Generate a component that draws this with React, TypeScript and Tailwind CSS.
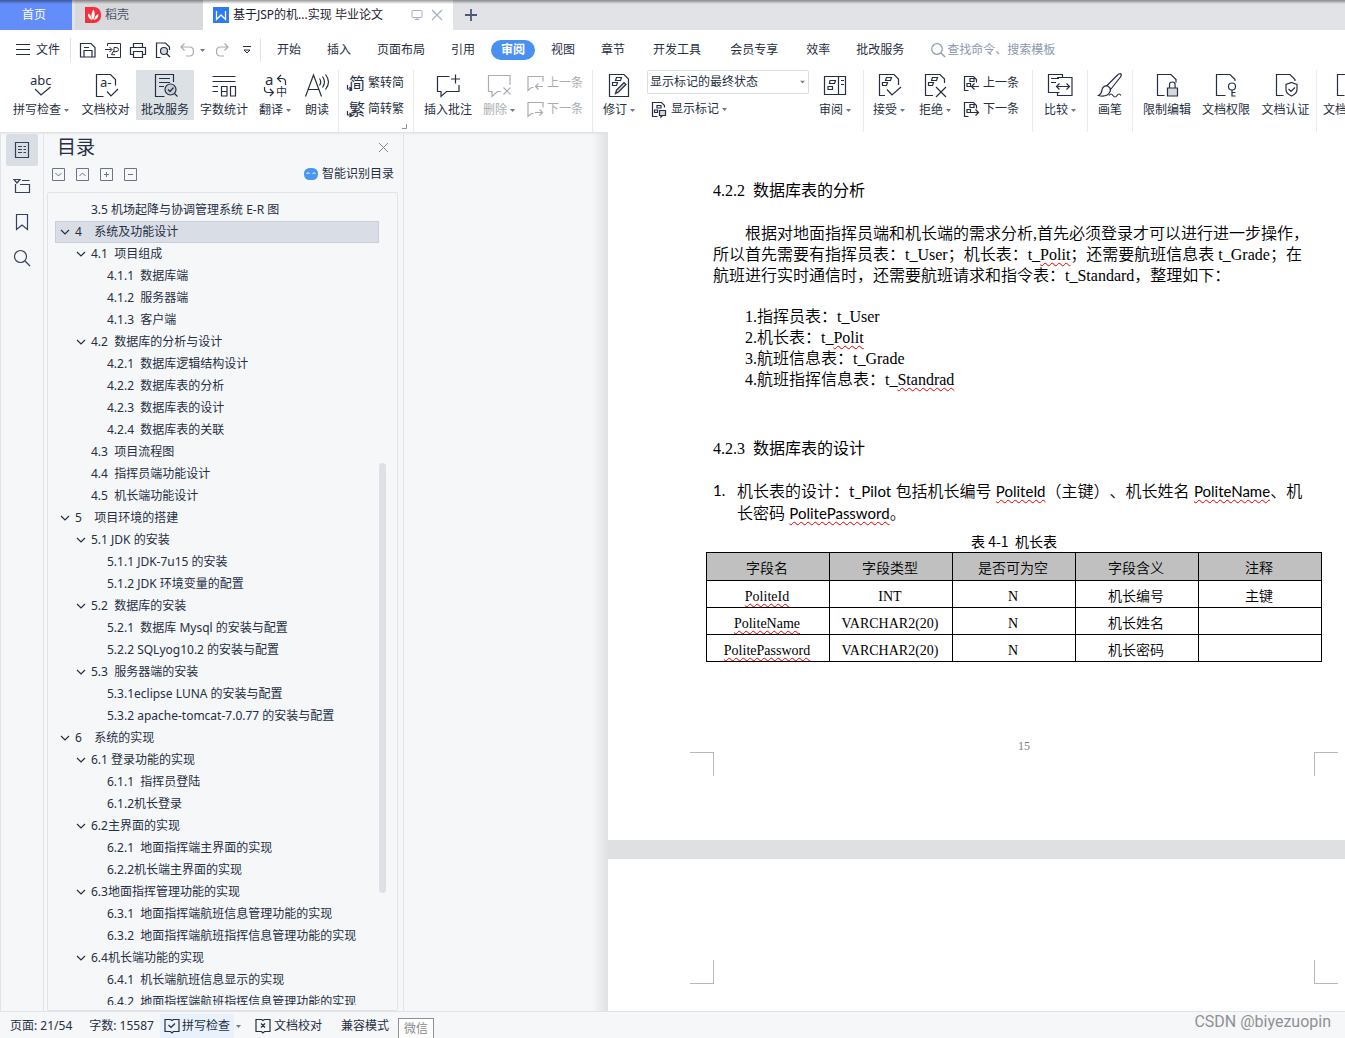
import React from "react";
import { LuMonitor } from "react-icons/lu";

type IconProps = { children: React.ReactNode; size?: string; box?: string; className?: string };

const Icon: React.FC<IconProps> = ({ children, size = "size-[26px]", box = "0 0 26 26", className = "" }) => (
  <svg viewBox={box} className={`${size} shrink-0 overflow-visible ${className}`} fill="none" stroke="currentColor" strokeWidth="1.2" aria-hidden="true">
    {children}
  </svg>
);

const Small: React.FC<{ children: React.ReactNode; className?: string }> = ({ children, className }) => (
  <Icon size="size-[18px]" box="0 0 18 18" className={className}>{children}</Icon>
);

const Caret = () => (
  <svg viewBox="0 0 5 3" className="w-[5px] h-[3px] shrink-0" fill="#6f788b" aria-hidden="true">
    <path d="M0 0h5L2.5 3z" />
  </svg>
);

const Divider = () => <div className="w-px h-[62px] bg-[#e9eaec] shrink-0" />;

// document outline with two revision marks, shared by the review buttons
const MarkedDoc = ({ d }: { d: string }) => (
  <>
    <path d={d} />
    <path d="M10.5 5.5h5l-1 3h-5zM6.5 10.5h5l-1 3h-4z" />
  </>
);

const icons = {
  spell: (
    <Icon>
      <text x="2" y="13" fontSize="13" fill="currentColor" stroke="none">abc</text>
      <path d="M7 17l6 6 9.500-8" />
    </Icon>
  ),
  proof: (
    <Icon>
      <path d="M10.500 24.500h-7v-22h14l5 5v6M14 19.500l4 4.500 7-7" />
      <text x="7" y="15" fontSize="13" fill="currentColor" stroke="none">a-</text>
    </Icon>
  ),
  correct: (
    <Icon>
      <path d="M12.500 24.500h-9v-22h18V10M7 6.500h11M7 10.500h11M7 14.500h5" />
      <circle cx="18.500" cy="17.500" r="5.500" fill="#c9ced6" />
      <path d="M22.500 21.500l3 3M16 17.500l2 2 3.500-4" />
    </Icon>
  ),
  count: (
    <Icon>
      <path d="M1.500 4.500h23M1.500 9.500h23M1.500 14.500H7M1.500 19.500H7M10.500 14.500h5.500v9.500h-5.500zM10.500 19.500H16M19.500 14.500h5v9.500h-5z" />
    </Icon>
  ),
  translate: (
    <Icon>
      <text x="3" y="13" fontSize="15" fill="currentColor" stroke="none">a</text>
      <text x="14" y="24" fontSize="11" fill="currentColor" stroke="none">中</text>
      <path d="M23.500 13v-3q0-3.500-3.500-3.500h-4M19 3l-3.500 3.500L19 10M2.500 15v2q0 3.500 3.500 3.500h5M8 17l3.500 3.500L8 24" />
    </Icon>
  ),
  read: (
    <Icon>
      <path d="M1.500 24.500L9.500 3l8 21.500M4.500 17.500h10.500M15.500 6.500q2.500 3.500 0 7M18.500 4.500q4 5.500 0 11M21.500 2.500q6 7.500 0 15" />
    </Icon>
  ),
  insertNote: (
    <Icon>
      <path d="M14.500 4.500h-12v15H6v5l5.500-5h12.500V13M20.500 2.500v9M16 7h9" />
    </Icon>
  ),
  deleteNote: (
    <Icon>
      <path d="M15 19.500h-3.500l-5.500 5v-5H2.500v-16h21.500V13M17.500 15.500l7 7M24.500 15.500l-7 7" />
    </Icon>
  ),
  revise: (
    <Icon>
      <MarkedDoc d="M3.500 2.500H18l4.500 4.500v17.500h-19z" />
      <path d="M9.500 21.500l1-3.500 7.500-7.500 2 2-7.500 7.500z" fill="#c9ced6" />
    </Icon>
  ),
  review: (
    <Icon>
      <path d="M2.500 4.500h21v18h-21zM16.500 4.500v18M19 8.500h3M19 12.500h3M8 8.500h5.500l-1 3h-5zM6 14.500h4.500v3H6z" />
    </Icon>
  ),
  accept: (
    <Icon>
      <MarkedDoc d="M9 23.500H3.500v-21h14.500l4.500 4.500v6M11 17.500l5 5.500 9-8" />
    </Icon>
  ),
  reject: (
    <Icon>
      <MarkedDoc d="M11 23.500H3.500v-21h14.500l4.500 4.500v4M14 15l10 10M24 15L14 25" />
    </Icon>
  ),
  compare: (
    <Icon>
      <path d="M12.500 20.500h-11v-18h14v3M15.500 5.500h9.500v18H10.500v-3M10 5.500h7M4 6.500h8M4 10.500h5M9.500 14.500h13M12.500 11.500l-3 3 3 3M19.500 11.500l3 3-3 3" />
    </Icon>
  ),
  brush: (
    <Icon>
      <path d="M23.500 1.500q1.500 1 0 3.500L14 17l-4-3.500L20 3.500q2-2 3.500-2zM10 14q-4-.5-5 4-.5 4-3.500 5.500 8 2 11-3 1.500-2 .5-4M12 23.500q2-3 4 0t4 0 4 0" />
    </Icon>
  ),
  restrict: (
    <Icon>
      <path d="M10.500 23.500h-7v-21H17l5 5v3M15.500 16v-3.500q0-2.500 2.800-2.500t2.800 2.500V16" />
      <path d="M13.500 16h10v8h-10z" fill="#d5d8dd" />
    </Icon>
  ),
  permission: (
    <Icon>
      <path d="M12.500 23.500h-9v-21H17l5 5v1.500M19 18v6.500M19 20.500h3.500M19 24h3.500" />
      <circle cx="19" cy="14.500" r="3.500" />
    </Icon>
  ),
  certify: (
    <Icon>
      <path d="M10.500 23.500h-7v-21H17l5 5v1.500M18.500 10.500l5.500 2v5q0 4-5.500 6.500-5.500-2.500-5.500-6.500v-5zM15.500 17l2.500 2.500 4-4" />
    </Icon>
  ),
};

const noteArrow = (arrow: string) => (
  <Small>
    <path d={`M7.500 13.500H5.500l-3.500 3v-14h15v5${arrow}`} />
  </Small>
);

const docArrow = (arrow: string) => (
  <Small>
    <path d={`M6.500 16.500h-4v-14h9l3 3v3M8 4.500h4v3H8zM5 9.500h3.500v3H5z${arrow}`} />
  </Small>
);

const convertIcon = (char: string) => (
  <Small>
    <text x="2" y="15" fontSize="16" fill="currentColor" stroke="none">{char}</text>
    <path d="M.5 11v4H4M2.500 13l2 2-2 2" />
  </Small>
);

const leftArrow = "M17 12.500H9.500M12.500 9.500l-3 3 3 3";
const rightArrow = "M9 12.500h7.500M13.500 9.500l3 3-3 3";

type BigProps = { icon: React.ReactNode; label: string; width: string; caret?: boolean; active?: boolean; muted?: boolean };

const BigButton: React.FC<BigProps> = ({ icon, label, width, caret, active, muted }) => (
  <button
    className={`${width} h-[50px] shrink-0 flex flex-col items-center justify-between pt-[2px] pb-[2px] whitespace-nowrap ${active ? "bg-[#dce1e6]" : ""} ${muted ? "text-[#a9acb3]" : ""}`}
  >
    {icon}
    <span className="flex items-center gap-[3px] leading-4">
      {label}
      {caret && <Caret />}
    </span>
  </button>
);

const RowButton: React.FC<{ icon: React.ReactNode; label: string; caret?: boolean; muted?: boolean }> = ({ icon, label, caret, muted }) => (
  <button className={`flex items-center gap-[3px] h-[26px] leading-4 whitespace-nowrap ${muted ? "text-[#a9acb3]" : ""}`}>
    {icon}
    {label}
    {caret && <Caret />}
  </button>
);

const outline: { level: number; text: string; open?: boolean; selected?: boolean }[] = [
  { level: 1, text: "3.5 机场起降与协调管理系统 E-R 图" },
  { level: 0, text: "4    系统及功能设计", open: true, selected: true },
  { level: 1, text: "4.1  项目组成", open: true },
  { level: 2, text: "4.1.1  数据库端" },
  { level: 2, text: "4.1.2  服务器端" },
  { level: 2, text: "4.1.3  客户端" },
  { level: 1, text: "4.2  数据库的分析与设计", open: true },
  { level: 2, text: "4.2.1  数据库逻辑结构设计" },
  { level: 2, text: "4.2.2  数据库表的分析" },
  { level: 2, text: "4.2.3  数据库表的设计" },
  { level: 2, text: "4.2.4  数据库表的关联" },
  { level: 1, text: "4.3  项目流程图" },
  { level: 1, text: "4.4  指挥员端功能设计" },
  { level: 1, text: "4.5  机长端功能设计" },
  { level: 0, text: "5    项目环境的搭建", open: true },
  { level: 1, text: "5.1 JDK 的安装", open: true },
  { level: 2, text: "5.1.1 JDK-7u15 的安装" },
  { level: 2, text: "5.1.2 JDK 环境变量的配置" },
  { level: 1, text: "5.2  数据库的安装", open: true },
  { level: 2, text: "5.2.1  数据库 Mysql 的安装与配置" },
  { level: 2, text: "5.2.2 SQLyog10.2 的安装与配置" },
  { level: 1, text: "5.3  服务器端的安装", open: true },
  { level: 2, text: "5.3.1eclipse LUNA 的安装与配置" },
  { level: 2, text: "5.3.2 apache-tomcat-7.0.77 的安装与配置" },
  { level: 0, text: "6    系统的实现", open: true },
  { level: 1, text: "6.1 登录功能的实现", open: true },
  { level: 2, text: "6.1.1  指挥员登陆" },
  { level: 2, text: "6.1.2机长登录" },
  { level: 1, text: "6.2主界面的实现", open: true },
  { level: 2, text: "6.2.1  地面指挥端主界面的实现" },
  { level: 2, text: "6.2.2机长端主界面的实现" },
  { level: 1, text: "6.3地面指挥管理功能的实现", open: true },
  { level: 2, text: "6.3.1  地面指挥端航班信息管理功能的实现" },
  { level: 2, text: "6.3.2  地面指挥端航班指挥信息管理功能的实现" },
  { level: 1, text: "6.4机长端功能的实现", open: true },
  { level: 2, text: "6.4.1  机长端航班信息显示的实现" },
  { level: 2, text: "6.4.2  地面指挥端航班指挥信息管理功能的实现" },
];

const indent = ["pl-1", "pl-5", "pl-9"];

const columns = ["字段名", "字段类型", "是否可为空", "字段含义", "注释"];
const rows = [
  ["PoliteId", "INT", "N", "机长编号", "主键"],
  ["PoliteName", "VARCHAR2(20)", "N", "机长姓名", ""],
  ["PolitePassword", "VARCHAR2(20)", "N", "机长密码", ""],
];

const Typo = ({ children }: { children: React.ReactNode }) => (
  <span className="underline decoration-wavy decoration-1 decoration-[#e00000] underline-offset-2">{children}</span>
);

const TabBar = () => (
  <div className="relative flex h-[30px] bg-[#e2e3e7] shrink-0 leading-[30px] whitespace-nowrap">
    <button className="w-[72px] bg-[#628dfa] text-white pr-1">首页</button>
    <button className="w-[128px] ml-[3px] bg-[#d8d9dc] flex items-center gap-1 pl-[10px] text-[#4b5468]">
      <svg viewBox="0 0 16 16" className="size-4" aria-hidden="true">
        <path d="M0 0h9a7 7 0 0 1 7 7v2a7 7 0 0 1-7 7H0z" fill="#f3303c" />
        <path d="M8 13C5 9 7 5 8.500 2.500 10 5 10.500 9 8 13zM7 13C4 12 2.500 9.500 3 6.500 5.500 7.500 6.500 10 7 13zM9 13c.5-3 2-5 4.500-6C13.500 10 12 12.500 9 13z" fill="#fff" />
      </svg>
      稻壳
    </button>
    <div className="w-[250px] bg-white flex items-center pl-[10px] text-[#1b2130]">
      <svg viewBox="0 0 16 16" className="size-4 mr-1" aria-hidden="true">
        <path d="M0 0h16v16H0z" fill="#2b7bf3" />
        <path d="M3.500 4v8.500L8 8l4.500 4.500V4" fill="none" stroke="#fff" strokeWidth="1.300" />
      </svg>
      基于JSP的机...实现 毕业论文
      <span className="ml-auto flex items-center gap-2 pr-[10px] text-[#a5afc4]">
        <LuMonitor className="size-3" />
        <button aria-label="关闭标签">
          <Icon size="size-3" box="0 0 12 12"><path d="M1 1l10 10M11 1L1 11" /></Icon>
        </button>
      </span>
    </div>
    <button aria-label="新建标签" className="ml-3 text-[#4c5a77]">
      <Icon size="size-3" box="0 0 12 12"><path d="M6 0v12M0 6h12" strokeWidth="1.800" /></Icon>
    </button>
    <div className="absolute inset-x-0 top-0 h-1 bg-linear-to-b from-black/40 to-transparent" />
  </div>
);

const MenuRow = () => {
  const menus = [["开始", "插入", "页面布局", "引用"], ["视图", "章节"]];
  return (
    <div className="flex items-center h-[38px] pt-[2px] bg-white shrink-0 whitespace-nowrap">
      <button className="flex items-center gap-[6px] pl-4">
        <Icon size="size-[14px]" box="0 0 14 14"><path d="M0 1.500h14M0 6.500h14M0 11.500h14" strokeWidth="1" /></Icon>
        文件
      </button>
      <div className="w-px h-6 ml-[10px] mr-[9px] bg-[#dfe1e5]" />
      <div className="flex items-center gap-[9px]">
        <button aria-label="保存"><Icon size="size-4" box="0 0 16 16"><path d="M.5 1.500h10.500l4 4v9.500H.5zM4 15V8.500h8V15M4 5.500h5" /></Icon></button>
        <button aria-label="输出为PDF"><Icon size="size-4" box="0 0 16 16"><path d="M2.500 4V1.500h13v14h-13V12M0 7.500h6.500M4.500 5l2.500 2.500L4.500 10M9 10V5.500h2q2.500 0 2.500 2t-2.500 2.200H8l-1.500 3H10" strokeWidth="1" /></Icon></button>
        <button aria-label="打印"><Icon size="size-4" box="0 0 16 16"><path d="M3.500 5V1.500h9V5M3.500 12.500h-3v-7h15v7h-3M3.500 9.500h9v6h-9z" /></Icon></button>
        <button aria-label="打印预览"><Icon size="size-4" box="0 0 16 16"><path d="M5.500 15.500h-4V1h9l4 4v3" /><circle cx="9" cy="9" r="3.500" fill="#d5d8dd" /><path d="M11.500 11.500l3.500 3.500" /></Icon></button>
        <button aria-label="撤销" className="flex items-center gap-1 text-[#a9acb3]">
          <Icon size="size-4" box="0 0 16 16"><path d="M4.500 1.500L1 5l3.500 3.500M1 5h8.500q4 0 4 4.500t-4 4.500H6" /></Icon>
          <Caret />
        </button>
        <button aria-label="恢复" className="text-[#a9acb3]"><Icon size="size-4" box="0 0 16 16"><path d="M10.500 1.500L14 5l-3.500 3.500M14 5H6.500q-4 0-4 4.500t4 4.500H10" /></Icon></button>
        <button aria-label="更多" className="pl-1"><Icon size="size-2" box="0 0 8 8"><path d="M0 .5h8M1 4l3 3 3-3z" strokeWidth="1" /></Icon></button>
      </div>
      <div className="w-px h-6 ml-[9px] bg-[#dfe1e5]" />
      <nav className="flex items-center pl-4">
        <div className="flex gap-[26px]">
          {menus[0].map((m) => <button key={m}>{m}</button>)}
        </div>
        <button className="mx-4 w-11 h-5 leading-5 rounded-full bg-[#4a90f3] text-white font-bold">审阅</button>
        <div className="flex gap-[26px]">
          {menus[1].map((m) => <button key={m}>{m}</button>)}
        </div>
        <div className="flex gap-[29px] px-[28px]">
          <button>开发工具</button>
          <button>会员专享</button>
        </div>
        <div className="flex gap-[26px]">
          <button>效率</button>
          <button>批改服务</button>
        </div>
      </nav>
      <label className="flex items-center gap-[2px] ml-[27px] text-[#8d98ae]">
        <Icon size="size-[14px]" box="0 0 14 14"><circle cx="6" cy="6" r="5.300" /><path d="M10 10l4 4" /></Icon>
        <input type="text" aria-label="查找命令" placeholder="查找命令、搜索模板" className="w-[130px] outline-none placeholder:text-[#8d98ae]" />
      </label>
    </div>
  );
};

const Ribbon = () => (
  <div className="flex h-16 pt-[2px] pl-[7px] bg-white shrink-0 overflow-hidden whitespace-nowrap">
    <BigButton icon={icons.spell} label="拼写检查" width="w-[68px]" caret />
    <BigButton icon={icons.proof} label="文档校对" width="w-[61px]" />
    <BigButton icon={icons.correct} label="批改服务" width="w-[58px]" active />
    <BigButton icon={icons.count} label="字数统计" width="w-[60px]" />
    <BigButton icon={icons.translate} label="翻译" width="w-[42px]" caret />
    <BigButton icon={icons.read} label="朗读" width="w-[42px]" />
    <Divider />
    <div className="w-[74px] shrink-0 flex flex-col pl-2">
      <RowButton icon={convertIcon("简")} label="繁转简" />
      <RowButton icon={convertIcon("繁")} label="简转繁" />
      <svg viewBox="0 0 5 5" className="size-[5px] self-end mr-[6px] mt-[2px]" fill="none" stroke="#8a92a3" aria-hidden="true"><path d="M4.500 0v4.500H0" /></svg>
    </div>
    <Divider />
    <BigButton icon={icons.insertNote} label="插入批注" width="w-[68px]" />
    <BigButton icon={icons.deleteNote} label="删除" width="w-[34px]" caret muted />
    <div className="w-[76px] shrink-0 flex flex-col pl-[10px]">
      <RowButton icon={noteArrow(leftArrow)} label="上一条" muted />
      <RowButton icon={noteArrow(rightArrow)} label="下一条" muted />
    </div>
    <Divider />
    <BigButton icon={icons.revise} label="修订" width="w-[52px]" caret />
    <div className="w-[166px] shrink-0 pl-[2px] pr-[2px]">
      <div className="relative">
        <select aria-label="显示方式" className="appearance-none block w-full h-6 pl-[2px] border border-[#dadde2] rounded-xs bg-white">
          <option>显示标记的最终状态</option>
        </select>
        <span className="absolute right-1 top-1/2 -translate-y-1/2"><Caret /></span>
      </div>
      <div className="pl-[3px] pt-[2px]">
        <RowButton icon={<Small><path d="M7.500 16.500h-5v-14h9l3 3v2M7 5.500h4v2.500H7zM4.500 10h3v2.500h-3z" /><path d="M9.500 10.500h6v5h-3l-1.500 1.500v-1.500h-1.500z" fill="#d5d8dd" /></Small>} label="显示标记" caret />
      </div>
    </div>
    <BigButton icon={icons.review} label="审阅" width="w-12" caret />
    <div className="w-1 shrink-0" />
    <Divider />
    <BigButton icon={icons.accept} label="接受" width="w-[50px]" caret />
    <BigButton icon={icons.reject} label="拒绝" width="w-[42px]" caret />
    <div className="w-[76px] shrink-0 flex flex-col pl-[6px]">
      <RowButton icon={docArrow(leftArrow)} label="上一条" />
      <RowButton icon={docArrow(rightArrow)} label="下一条" />
    </div>
    <Divider />
    <BigButton icon={icons.compare} label="比较" width="w-[54px]" caret />
    <Divider />
    <BigButton icon={icons.brush} label="画笔" width="w-[44px]" />
    <Divider />
    <div className="flex pl-1">
      <BigButton icon={icons.restrict} label="限制编辑" width="w-[60px]" />
      <BigButton icon={icons.permission} label="文档权限" width="w-[58px]" />
      <BigButton icon={icons.certify} label="文档认证" width="w-[61px]" />
    </div>
    <Divider />
    <BigButton icon={icons.restrict} label="文档定稿" width="w-[60px]" />
  </div>
);

const SideBar = () => (
  <div className="w-11 shrink-0 border-x border-[#e1e3e8] pt-[2px] flex flex-col items-center gap-1 text-[#35415c]">
    <button aria-label="目录" className="size-8 grid place-items-center rounded-xs bg-[#d9dee5]">
      <Icon size="size-4" box="0 0 16 16"><path d="M1.500.5h13v15h-13zM4 4.500h4M9.500 4.500h2.500M4 7.500h4M9.500 7.500h2.500M4 10.500h4M9.500 10.500h2.500" /></Icon>
    </button>
    <button aria-label="章节" className="size-8 grid place-items-center">
      <Icon size="size-4" box="0 0 16 16"><path d="M0 1.500h6L3 5zM8 2.500h7.500M1.500 6v8.500h14v-8H6" /></Icon>
    </button>
    <button aria-label="书签" className="size-8 grid place-items-center">
      <Icon size="size-4" box="0 0 16 16"><path d="M2.500.5h11v15L8 11l-5.500 4.500z" /></Icon>
    </button>
    <button aria-label="查找" className="size-8 grid place-items-center">
      <Icon size="size-4" box="0 0 16 16"><circle cx="6.500" cy="6.500" r="6" /><path d="M11 11l5 5" /></Icon>
    </button>
  </div>
);

const OutlinePanel = () => {
  const tools = [
    { name: "展开", d: "M3.500 5L6.500 8l3-3" },
    { name: "折叠", d: "M3.500 8L6.500 5l3 3" },
    { name: "增加级别", d: "M6.500 4v5M4 6.500h5" },
    { name: "减少级别", d: "M4 6.500h5" },
  ];
  return (
    <aside className="w-[360px] shrink-0 border-r border-[#e1e3e8] px-[3px] flex flex-col">
      <div className="flex items-center justify-between pl-[10px] pr-[11px] h-[30px]">
        <h2 className="text-[19px] leading-7">目录</h2>
        <button aria-label="关闭目录" className="text-[#7d8596]">
          <Icon size="size-[11px]" box="0 0 11 11"><path d="M1 1l9 9M10 1l-9 9" strokeWidth="1" /></Icon>
        </button>
      </div>
      <div className="flex items-center gap-[11px] pl-[5px] pr-[6px] h-6">
        {tools.map((t) => (
          <button key={t.name} aria-label={t.name} className="text-[#6b7486]">
            <Icon size="size-[13px]" box="0 0 13 13"><path d="M.5.5h12v12H.5z" strokeWidth="1" /><path d={t.d} strokeWidth="1" /></Icon>
          </button>
        ))}
        <button className="ml-auto flex items-center gap-1">
          <svg viewBox="0 0 14 12" className="w-[14px] h-3" aria-hidden="true">
            <rect width="14" height="12" rx="5.500" fill="#4a97f2" />
            <path d="M2.500 6l1.500-1.500L5.500 6M8.500 6L10 4.500 11.500 6" fill="none" stroke="#fff" />
          </svg>
          智能识别目录
        </button>
      </div>
      <div className="relative flex-1 min-h-0 mt-[6px] mr-[2px] border border-[#e1e3e8] rounded-xs pt-[6px] pb-[5px] px-[7px]">
        <ul className="h-full overflow-hidden pr-[11px]">
          {outline.map((item) => (
            <li
              key={item.text}
              className={`flex items-center gap-1 h-[22px] whitespace-pre ${indent[item.level]} ${item.selected ? "bg-[#d9dde6] outline -outline-offset-1 outline-[#c9cfda]" : ""}`}
            >
              <Icon size="size-3" box="0 0 12 12">{item.open && <path d="M2 4l4 4 4-4" />}</Icon>
              {item.text}
            </li>
          ))}
        </ul>
        <div className="absolute right-[11px] top-[33%] h-[430px] w-[7px] rounded-sm bg-[#dde1e5]" />
      </div>
    </aside>
  );
};

const Document = () => (
  <main className="flex-1 min-w-0 flex overflow-hidden text-black">
    <div className="w-[204px] shrink-0 flex justify-end">
      <div className="w-4 bg-linear-to-r from-transparent to-[#e0e1e3]" />
    </div>
    <div className="flex-1 min-w-0 flex flex-col bg-[#dfe0e2]">
      <article className="bg-white pt-12 pb-16 font-['Liberation_Serif','Noto_Sans_CJK_SC',serif] text-base leading-[21px] whitespace-nowrap [text-spacing-trim:space-all]">
        <div className="pl-[105px]">
          <h3>4.2.2&nbsp; 数据库表的分析</h3>
          <p className="mt-[22px] font-[350]">
            <span className="block pl-8">根据对地面指挥员端和机长端的需求分析,首先必须登录才可以进行进一步操作，</span>
            <span className="block">所以首先需要有指挥员表：t_User；机长表：t_<Typo>Polit</Typo>；还需要航班信息表 t_Grade；在</span>
            <span className="block">航班进行实时通信时，还需要航班请求和指令表：t_Standard，整理如下：</span>
          </p>
          <div className="mt-5 pl-8 font-[350]">
            <p>1.指挥员表：t_User</p>
            <p>2.机长表：t_<Typo>Polit</Typo></p>
            <p>3.航班信息表：t_Grade</p>
            <p>4.航班指挥信息表：t_<Typo>Standrad</Typo></p>
          </div>
          <h3 className="mt-12">4.2.3&nbsp; 数据库表的设计</h3>
          <div className="mt-[21px] flex font-['Lato','Noto_Sans_CJK_SC',sans-serif]">
            <span className="w-6 text-[15px]">1.</span>
            <p className="font-[350]">
              <span className="block">机长表的设计：<span className="text-[15px] font-normal">t_Pilot</span> 包括机长编号 <span className="text-[15px] font-normal"><Typo>PoliteId</Typo></span>（主键）、机长姓名 <span className="text-[15px] font-normal"><Typo>PoliteName</Typo></span>、机</span>
              <span className="block">长密码 <span className="text-[15px] font-normal"><Typo>PolitePassword</Typo></span>。</span>
            </p>
          </div>
        </div>
        <div className="pl-[98px] pr-[23px] mt-[7px] text-sm">
          <table className="w-full table-fixed border-collapse text-center leading-[21px]">
            <caption className="leading-[21px] font-['Noto_Sans_CJK_SC',sans-serif]">表 4-1&nbsp; 机长表</caption>
            <thead>
              <tr className="bg-[#c0c0c0]">
                {columns.map((c) => (
                  <th key={c} className="border border-black h-7 pt-1 pr-[2px] font-[350]">{c}</th>
                ))}
              </tr>
            </thead>
            <tbody>
              {rows.map((r) => (
                <tr key={r[0]}>
                  {r.map((cell, i) => (
                    <td key={i} className="border border-black h-[27px] pt-1 pr-[2px] font-[350]">{i === 0 ? <Typo>{cell}</Typo> : cell}</td>
                  ))}
                </tr>
              ))}
            </tbody>
          </table>
        </div>
        <div className="mt-[74px] h-10 flex items-end justify-between pl-[82px] pr-[7px]">
          <div className="size-6 border-t border-r border-[#b9b9b9]" />
          <span className="self-start pl-5 text-xs leading-[21px] text-[#808080]">15</span>
          <div className="size-6 border-t border-l border-[#b9b9b9]" />
        </div>
      </article>
      <article className="mt-[19px] flex-1 bg-white pt-[101px] pl-[82px] pr-[7px] flex items-start justify-between">
        <div className="size-6 border-b border-r border-[#b9b9b9]" />
        <div className="size-6 border-b border-l border-[#b9b9b9]" />
      </article>
    </div>
  </main>
);

const StatusBar = () => (
  <footer className="flex items-center h-[27px] pt-[2px] pl-[10px] border-t border-[#e1e3e8] shrink-0 whitespace-nowrap">
    <span>页面: 21/54</span>
    <span className="ml-[17px]">字数: 15587</span>
    <button className="ml-[6px] h-6 px-1 flex items-center gap-[2px] bg-[#e8f1fc]">
      <Icon size="size-4" box="0 0 16 16"><path d="M1 1.500h5.500l1.500 1 1.500-1h5.500v12h-5.500l-1.500 1.500-1.500-1.500H1zM4.500 7l2.500 2.500 4-4" /></Icon>
      拼写检查
    </button>
    <span className="ml-[2px]"><Caret /></span>
    <button className="ml-[14px] flex items-center gap-[3px]">
      <Icon size="size-4" box="0 0 16 16"><path d="M1 1.500h5.500l1.500 1 1.500-1h5.500v12h-5.500l-1.500 1.500-1.500-1.500H1zM6 5.500l4 4M10 5.500l-4 4" /></Icon>
      文档校对
    </button>
    <button className="ml-[19px]">兼容模式</button>
    <div className="ml-[9px] self-end h-5 px-[5px] border border-b-0 border-[#8f8f8f] bg-white text-[#8a8a8a] leading-5">微信</div>
    <span className="ml-auto self-start pr-[14px] font-['Roboto',sans-serif] text-base leading-4 text-[#8f9094]">CSDN @biyezuopin</span>
  </footer>
);

const App: React.FC = () => {
  return (
    <div className="h-screen flex flex-col overflow-hidden bg-[#f5f7f9] text-xs text-[#262f42] font-['Noto_Sans','Noto_Sans_CJK_SC',sans-serif]">
      <TabBar />
      <MenuRow />
      <Ribbon />
      <div className="flex flex-1 min-h-0 shadow-[inset_0_3px_3px_-2px_rgba(0,0,0,0.12)]">
        <SideBar />
        <OutlinePanel />
        <Document />
      </div>
      <StatusBar />
    </div>
  );
};

export default App;
